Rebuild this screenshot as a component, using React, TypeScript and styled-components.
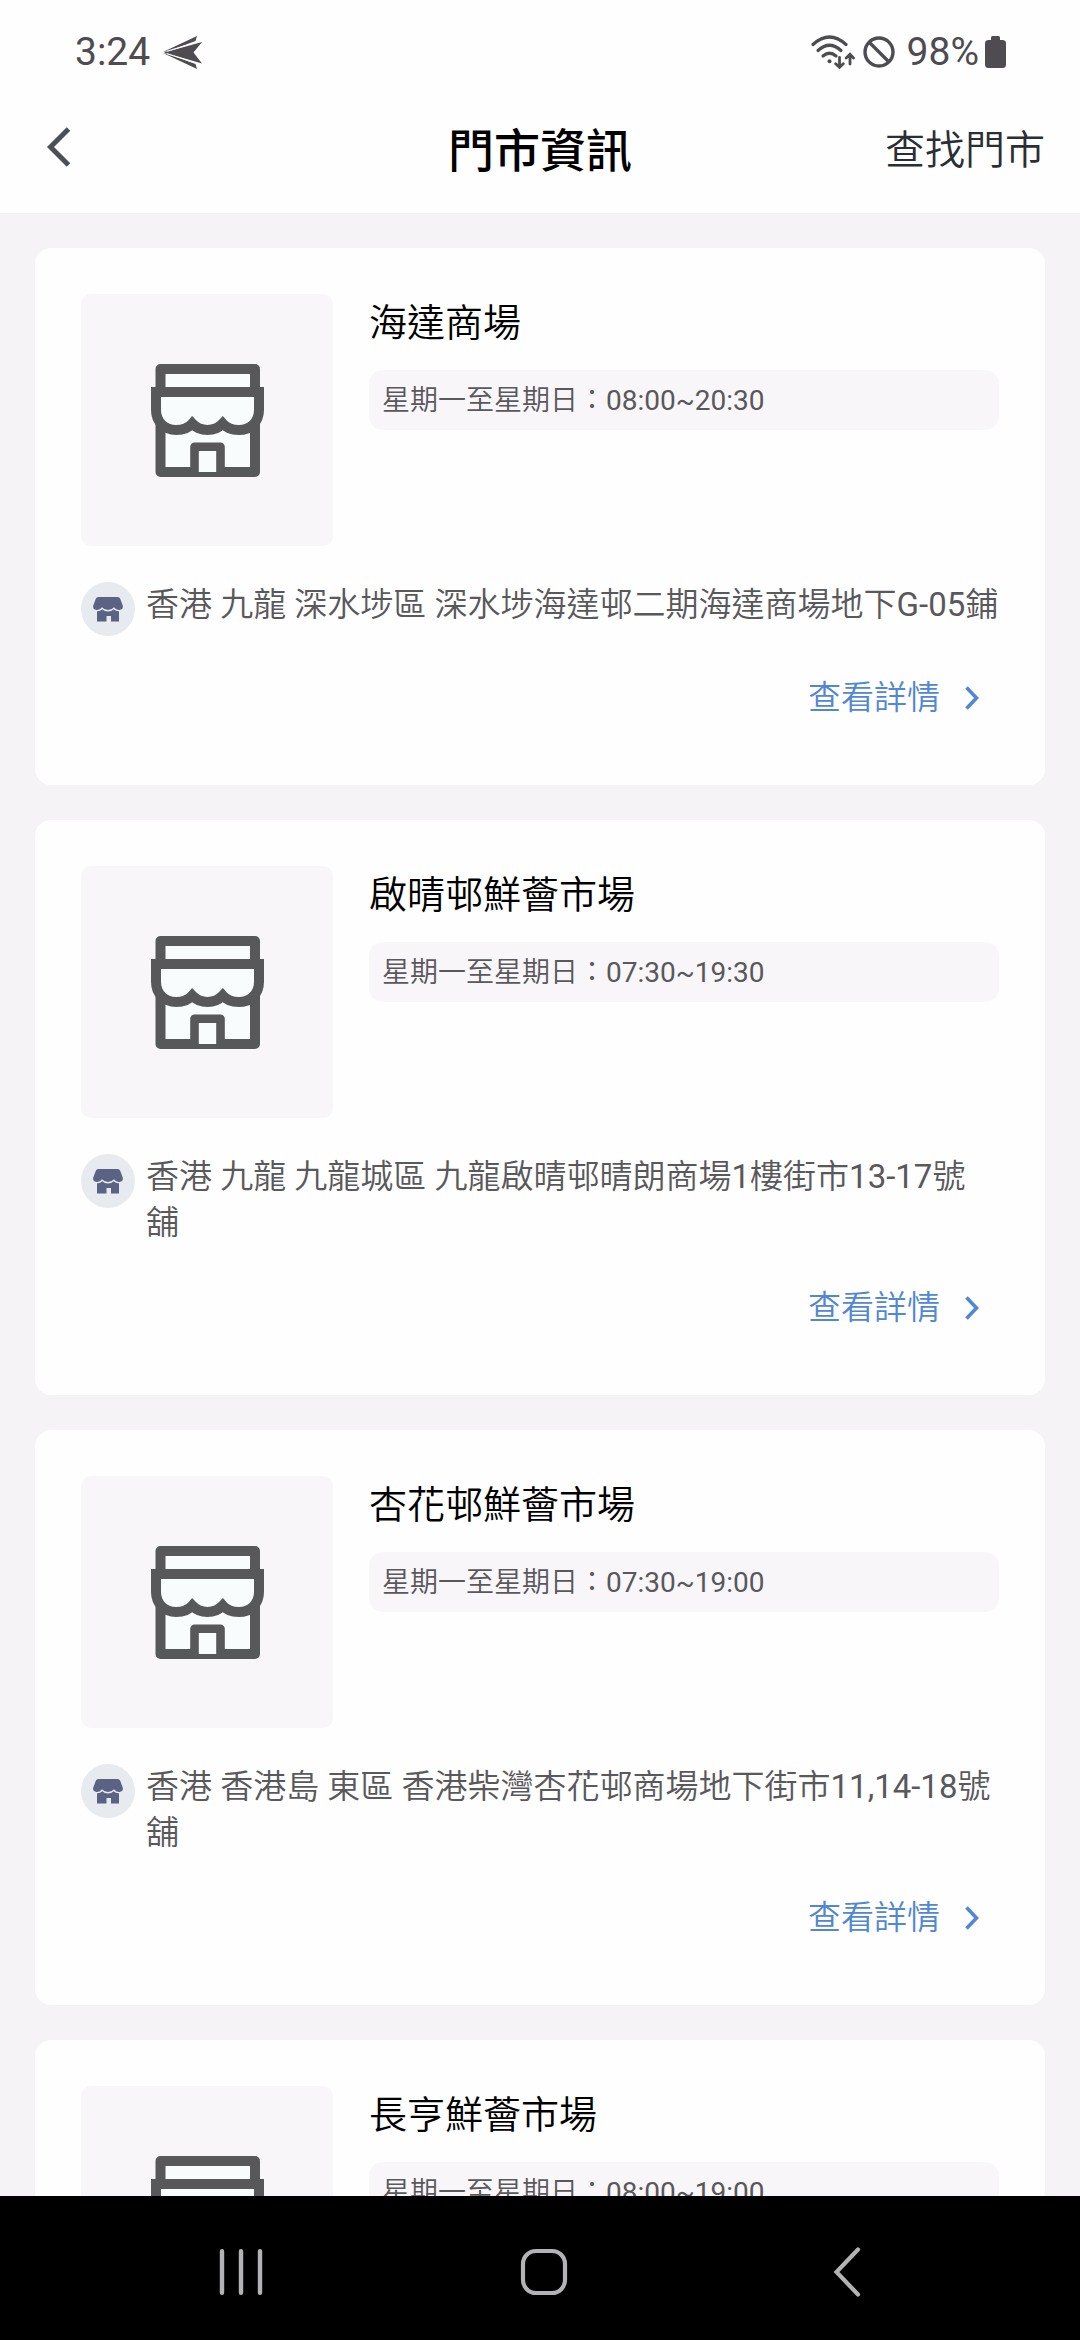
import React from "react";
import styled, { createGlobalStyle } from "styled-components";

const GlobalStyle = createGlobalStyle`
  * { box-sizing: border-box; }
  body {
    margin: 0;
    background: #f5f3f6;
    font-family: Roboto, "Noto Sans CJK TC DemiLight", "Noto Sans CJK TC", sans-serif;
  }
  h1, h2, p, ul { margin: 0; padding: 0; }
  button {
    border: 0;
    padding: 0;
    background: none;
    font: inherit;
    color: inherit;
    cursor: pointer;
  }
  svg { display: block; flex: none; }
`;

const Screen = styled.div`
  height: 100vh;
  display: flex;
  flex-direction: column;
  overflow: hidden;
`;

const StatusBar = styled.div`
  display: flex;
  align-items: center;
  justify-content: space-between;
  height: 87px;
  padding: 17px 74px 0 75px;
  background: #fefefe;
  color: #4e4c50;
  font-size: 39px;
  line-height: 46px;
`;

const StatusGroup = styled.div<{ $gap: number }>`
  display: flex;
  align-items: center;
  gap: ${(p) => p.$gap}px;
`;

const Header = styled.header`
  display: grid;
  grid-template-columns: 1fr auto 1fr;
  align-items: center;
  height: 126px;
  padding: 2px 35px 0;
  background: #fefefe;
`;

const BackButton = styled.button`
  justify-self: start;
  padding: 0 12px 8px;
  color: #4b4f5a;
`;

const Title = styled.h1`
  font-family: Roboto, "Noto Sans CJK TC", sans-serif;
  font-size: 46px;
  line-height: 60px;
  font-weight: 500;
  color: #000;
`;

const FindButton = styled.button`
  justify-self: end;
  font-size: 40px;
  line-height: 60px;
  color: #2b2f33;
`;

const Main = styled.main`
  flex: 1;
  min-height: 0;
  overflow: hidden;
  padding: 35px;
`;

const StoreList = styled.ul`
  display: flex;
  flex-direction: column;
  gap: 35px;
  list-style: none;
`;

const Card = styled.li`
  padding: 46px;
  border-radius: 16px;
  background: #fefefe;
`;

const CardTop = styled.div`
  display: flex;
  gap: 36px;
`;

const Thumb = styled.div`
  display: flex;
  align-items: center;
  justify-content: center;
  flex: none;
  width: 252px;
  height: 252px;
  border-radius: 10px;
  background: #f8f6f9;
`;

const Info = styled.div`
  flex: 1;
  min-width: 0;
`;

const StoreName = styled.h2`
  font-size: 38px;
  line-height: 58px;
  font-weight: 400;
  color: #000;
`;

const Hours = styled.p`
  margin-top: 18px;
  padding: 2px 13px 0;
  border-radius: 14px;
  background: #f8f6f9;
  color: #59585b;
  font-size: 28px;
  line-height: 58px;
`;

const Address = styled.div`
  display: flex;
  align-items: flex-start;
  gap: 11px;
  margin-top: 36px;
`;

const Badge = styled.span`
  display: flex;
  align-items: center;
  justify-content: center;
  flex: none;
  width: 54px;
  height: 54px;
  border-radius: 50%;
  background: #e7eaee;
`;

const AddressText = styled.p`
  flex: 1;
  min-width: 0;
  color: #59585b;
  font-size: 33px;
  line-height: 46px;
  white-space: pre-line;
`;

const CardFooter = styled.div`
  display: flex;
  justify-content: flex-end;
  margin-top: 19px;
`;

const DetailLink = styled.a`
  display: flex;
  align-items: center;
  gap: 25px;
  height: 84px;
  padding: 2px 20px 0 0;
  color: #5187d3;
  font-size: 33px;
  line-height: 46px;
  text-decoration: none;
`;

const NavBar = styled.nav`
  display: flex;
  flex: none;
  height: 144px;
  padding: 8px 82px 0 90px;
  background: #000;
  color: #b4b2b5;
`;

const NavButton = styled.button`
  display: flex;
  flex: 1;
  align-items: center;
  justify-content: center;
`;

const StoreIcon = () => (
  <svg width="113" height="113" viewBox="0 0 113 113" fill="#f9fcfc" stroke="#56585a" aria-hidden="true">
    <rect x="9.5" y="5" width="94.5" height="103" strokeWidth="10" strokeLinejoin="round" />
    <path d="M43.5 108V82.8h26V108" strokeWidth="8.6" strokeLinejoin="round" />
    <path
      d="M5 28H108V46C108 58 99 66 88 66C81 66 75 63.500 71.700 59.500C68 63.500 63 66 56.500 66C50 66 45 63.500 41.300 59.500C38 63.500 32 66 25 66C14 66 5 58 5 46Z"
      strokeWidth="10"
    />
    <path d="M5 28H108" strokeWidth="10" strokeLinecap="round" />
  </svg>
);

const SmallStoreIcon = () => (
  <svg width="30" height="25" viewBox="0 0 30 25" fill="#5b6384" aria-hidden="true">
    <path d="M5.500 0h19q2 0 2.700 1.800l2.600 7q.6 3.700-3.300 4.100q-3.500.3-5.500-2.600q-2.300 2.800-6 2.800t-6-2.800q-2 2.900-5.500 2.600q-3.900-.4-3.300-4.100l2.600-7q.7-1.800 2.700-1.800z" />
    <path d="M4 14.200q3.200.3 5.200-2q2.300 2.300 5.800 2.300t5.800-2.300q2 2.300 5.200 2v10.300h-8v-5.500h-4.500v5.500h-9.500z" />
  </svg>
);

const PlaneIcon = () => (
  <svg width="39" height="33" viewBox="0 0 39 33" fill="currentColor" aria-hidden="true">
    <path d="M0 16L34 0L32.500 5L6 15Z" />
    <path d="M1 16.500L39 6L30.500 16.500L39 27.500Z" />
    <path d="M0 17L34 33L32.500 28L6 18Z" />
    <path d="M4 15.300L38 4.800M4 17.700L38 28.700" stroke="#fefefe" strokeWidth="1.200" />
  </svg>
);

const WifiIcon = () => (
  <svg width="44" height="34" viewBox="0 0 44 34" fill="none" stroke="currentColor" strokeWidth="3.200" strokeLinecap="round" aria-hidden="true">
    <path d="M2 9.500Q18.500-5.500 35 9.500" />
    <path d="M7 15.500Q18.500 5 30 15.500" />
    <path d="M12 21Q18.500 15.500 25 21" />
    <circle cx="18.500" cy="26.300" r="2" fill="currentColor" stroke="none" />
    <path d="M28.500 22.500V32M24.700 28.700L28.500 32.300L32.300 28.700M39 29V20M35.200 23L39 19.300L42.500 23" strokeWidth="2.800" />
  </svg>
);

const BlockIcon = () => (
  <svg width="32" height="32" viewBox="0 0 32 32" fill="none" stroke="currentColor" strokeWidth="3.400" aria-hidden="true">
    <circle cx="16" cy="16" r="14" />
    <path d="M6 6L26 26" />
  </svg>
);

const BatteryIcon = () => (
  <svg width="21" height="32" viewBox="0 0 21 32" fill="currentColor" aria-hidden="true">
    <rect x="6" y="0" width="9" height="8" rx="1.500" />
    <rect x="0" y="4" width="21" height="28" rx="3.500" />
  </svg>
);

const stores = [
  {
    name: "海達商場",
    hours: "星期一至星期日：08:00~20:30",
    address: "香港 九龍 深水埗區 深水埗海達邨二期海達商場地下G-05鋪",
  },
  {
    name: "啟晴邨鮮薈市場",
    hours: "星期一至星期日：07:30~19:30",
    address: "香港 九龍 九龍城區 九龍啟晴邨晴朗商場1樓街市13-17號\n舖",
  },
  {
    name: "杏花邨鮮薈市場",
    hours: "星期一至星期日：07:30~19:00",
    address: "香港 香港島 東區 香港柴灣杏花邨商場地下街市11,14-18號\n舖",
  },
  {
    name: "長亨鮮薈市場",
    hours: "星期一至星期日：08:00~19:00",
    address: "",
  },
];

export default function App() {
  return (
    <Screen lang="zh-Hant">
      <GlobalStyle />
      <StatusBar>
        <StatusGroup $gap={13}>
          <span>3:24</span>
          <PlaneIcon />
        </StatusGroup>
        <StatusGroup $gap={12}>
          <StatusGroup $gap={8}>
            <WifiIcon />
            <BlockIcon />
          </StatusGroup>
          <StatusGroup $gap={6}>
            <span>98%</span>
            <BatteryIcon />
          </StatusGroup>
        </StatusGroup>
      </StatusBar>
      <Header>
        <BackButton type="button" aria-label="返回">
          <svg width="24" height="40" viewBox="0 0 24 40" fill="none" stroke="currentColor" strokeWidth="5" aria-hidden="true">
            <path d="M21.500 2L3.500 20L21.500 38" />
          </svg>
        </BackButton>
        <Title>門市資訊</Title>
        <FindButton type="button">查找門市</FindButton>
      </Header>
      <Main>
        <StoreList>
          {stores.map((store) => (
            <Card key={store.name}>
              <CardTop>
                <Thumb>
                  <StoreIcon />
                </Thumb>
                <Info>
                  <StoreName>{store.name}</StoreName>
                  <Hours>{store.hours}</Hours>
                </Info>
              </CardTop>
              {store.address && (
                <>
                  <Address>
                    <Badge>
                      <SmallStoreIcon />
                    </Badge>
                    <AddressText>{store.address}</AddressText>
                  </Address>
                  <CardFooter>
                    <DetailLink href="#">
                      查看詳情
                      <svg width="14" height="24" viewBox="0 0 14 24" fill="none" stroke="currentColor" strokeWidth="3.600" aria-hidden="true">
                        <path d="M1.500 1.500L11.500 12L1.500 22.500" />
                      </svg>
                    </DetailLink>
                  </CardFooter>
                </>
              )}
            </Card>
          ))}
        </StoreList>
      </Main>
      <NavBar>
        <NavButton type="button" aria-label="最近使用">
          <svg width="44" height="48" viewBox="0 0 44 48" stroke="currentColor" strokeWidth="4.400" strokeLinecap="round" aria-hidden="true">
            <path d="M3 3.200V44.800M22 3.200V44.800M41 3.200V44.800" />
          </svg>
        </NavButton>
        <NavButton type="button" aria-label="主畫面">
          <svg width="48" height="48" viewBox="0 0 48 48" fill="none" stroke="currentColor" strokeWidth="4.200" aria-hidden="true">
            <rect x="3" y="3" width="42" height="42" rx="13" />
          </svg>
        </NavButton>
        <NavButton type="button" aria-label="上一頁">
          <svg width="28" height="50" viewBox="0 0 28 50" fill="none" stroke="currentColor" strokeWidth="4.200" strokeLinecap="round" aria-hidden="true">
            <path d="M25 2.500L3.500 25L25 47.500" />
          </svg>
        </NavButton>
      </NavBar>
    </Screen>
  );
}
